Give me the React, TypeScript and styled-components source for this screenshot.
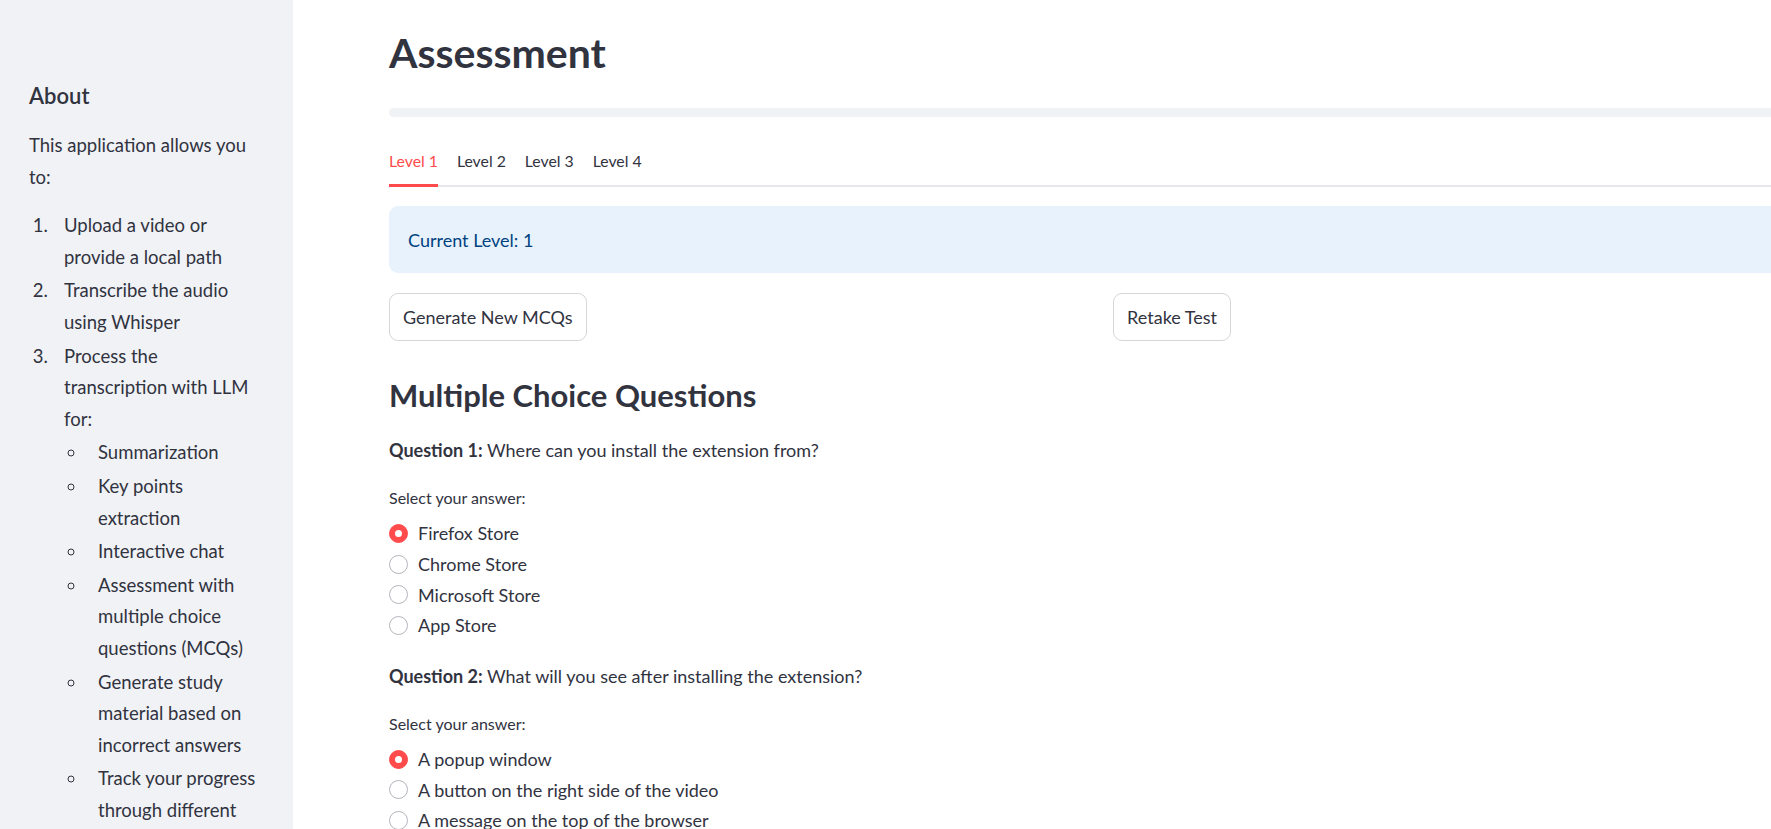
import React from 'react'
import styled, { createGlobalStyle } from 'styled-components'

const GlobalStyle = createGlobalStyle`
  html, body {
    margin: 0;
    padding: 0;
    overflow: hidden;
    background: #ffffff;
  }
  body {
    font-family: Lato, "Liberation Sans", sans-serif;
    color: #31333f;
  }
`

const Page = styled.div`
  display: flex;
  height: 829px;
  overflow: hidden;
`

const Sidebar = styled.aside`
  background: #f0f2f6;
  box-sizing: border-box;
  flex-shrink: 0;
  font-size: 18.5px;
  line-height: 31.6px;
  padding: 81px 31px 0 29px;
  width: 293px;
`

const SideHeading = styled.h3`
  font-size: 22px;
  font-weight: 600;
  line-height: 30px;
  margin: 0 0 19px;
`

const SideText = styled.p`
  margin: 0 0 17px;
`

const OrderedList = styled.ol`
  margin: 0;
  padding-left: 23.5px;
`

const BulletList = styled.ul`
  list-style: circle;
  margin: 0;
  padding-left: 22.5px;
`

const Item = styled.li`
  margin: 2px 0;
  padding-left: 11.5px;
`

const Main = styled.main`
  flex: 1;
  overflow: hidden;
  padding-left: 96px;
`

const Content = styled.div`
  display: flex;
  flex-direction: column;
  width: 1429px;
`

const Title = styled.h1`
  font-size: 41px;
  font-weight: 700;
  line-height: 52px;
  margin: 27px 0 0;
`

const Progress = styled.div`
  background: #f0f2f6;
  border-radius: 10px;
  height: 9px;
  margin-top: 29px;
`

const TabBar = styled.div`
  border-bottom: 2px solid #e6e7eb;
  display: flex;
  gap: 19px;
  margin-top: 30px;
`

const Tab = styled.div<{ $active?: boolean }>`
  border-bottom: 3px solid ${(p) => (p.$active ? '#ff4b4b' : 'transparent')};
  color: ${(p) => (p.$active ? '#ff4b4b' : '#31333f')};
  font-size: 15.8px;
  line-height: 28px;
  margin-bottom: -2px;
  padding-bottom: 9px;
`

const InfoBox = styled.div`
  background: #e8f2fc;
  border-radius: 9px;
  color: #004280;
  font-size: 18px;
  line-height: 28px;
  margin-top: 19px;
  padding: 19.5px 19px;
`

const ButtonRow = styled.div`
  display: grid;
  gap: 19.2px;
  grid-template-columns: 1fr 1fr;
  margin-top: 20px;
`

const Button = styled.button`
  background: #ffffff;
  border: 1px solid #d5d6da;
  border-radius: 9px;
  color: #31333f;
  font-family: inherit;
  font-size: 18px;
  height: 48px;
  justify-self: start;
  padding: 0 13px;
`

const SubHeading = styled.h3`
  font-size: 31px;
  font-weight: 700;
  line-height: 40px;
  margin: 34px 0 0;
`

const Question = styled.p`
  font-size: 18px;
  line-height: 30px;
  margin: 20px 0 0;

  b {
    font-weight: 700;
  }
`

const AnswerLabel = styled.div`
  font-size: 16px;
  line-height: 24px;
  margin-top: 21px;
`

const Options = styled.div`
  display: flex;
  flex-direction: column;
  margin-top: 8px;
`

const Option = styled.label`
  align-items: center;
  display: flex;
  font-size: 18px;
  gap: 10px;
  height: 30.7px;
`

const Radio = styled.span<{ $checked?: boolean }>`
  background: ${(p) => (p.$checked ? '#ff4b4b' : '#ffffff')};
  border: 1px solid ${(p) => (p.$checked ? '#ff4b4b' : '#b4b5bb')};
  border-radius: 50%;
  box-sizing: border-box;
  flex-shrink: 0;
  height: 19px;
  position: relative;
  width: 19px;

  &::after {
    background: #ffffff;
    border-radius: 50%;
    content: '';
    display: ${(p) => (p.$checked ? 'block' : 'none')};
    height: 7px;
    left: 5px;
    position: absolute;
    top: 5px;
    width: 7px;
  }
`

const questions = [
  {
    n: 1,
    text: 'Where can you install the extension from?',
    options: ['Firefox Store', 'Chrome Store', 'Microsoft Store', 'App Store'],
  },
  {
    n: 2,
    text: 'What will you see after installing the extension?',
    options: ['A popup window', 'A button on the right side of the video', 'A message on the top of the browser', 'Nothing'],
  },
]

export default function App() {
  return (
    <>
      <GlobalStyle />
      <Page>
        <Sidebar>
          <SideHeading>About</SideHeading>
          <SideText>This application allows you to:</SideText>
          <OrderedList>
            <Item>Upload a video or provide a local path</Item>
            <Item>Transcribe the audio using Whisper</Item>
            <Item>
              Process the transcription with LLM for:
              <BulletList>
                <Item>Summarization</Item>
                <Item>Key points extraction</Item>
                <Item>Interactive chat</Item>
                <Item>Assessment with multiple choice questions (MCQs)</Item>
                <Item>Generate study material based on incorrect answers</Item>
                <Item>Track your progress through different levels</Item>
              </BulletList>
            </Item>
          </OrderedList>
        </Sidebar>
        <Main>
          <Content>
            <Title>Assessment</Title>
            <Progress />
            <TabBar>
              <Tab $active>Level 1</Tab>
              <Tab>Level 2</Tab>
              <Tab>Level 3</Tab>
              <Tab>Level 4</Tab>
            </TabBar>
            <InfoBox>Current Level: 1</InfoBox>
            <ButtonRow>
              <Button>Generate New MCQs</Button>
              <Button>Retake Test</Button>
            </ButtonRow>
            <SubHeading>Multiple Choice Questions</SubHeading>
            {questions.map((q) => (
              <React.Fragment key={q.n}>
                <Question>
                  <b>Question {q.n}:</b> {q.text}
                </Question>
                <AnswerLabel>Select your answer:</AnswerLabel>
                <Options>
                  {q.options.map((o, i) => (
                    <Option key={o}>
                      <Radio $checked={i === 0} />
                      {o}
                    </Option>
                  ))}
                </Options>
              </React.Fragment>
            ))}
          </Content>
        </Main>
      </Page>
    </>
  )
}
